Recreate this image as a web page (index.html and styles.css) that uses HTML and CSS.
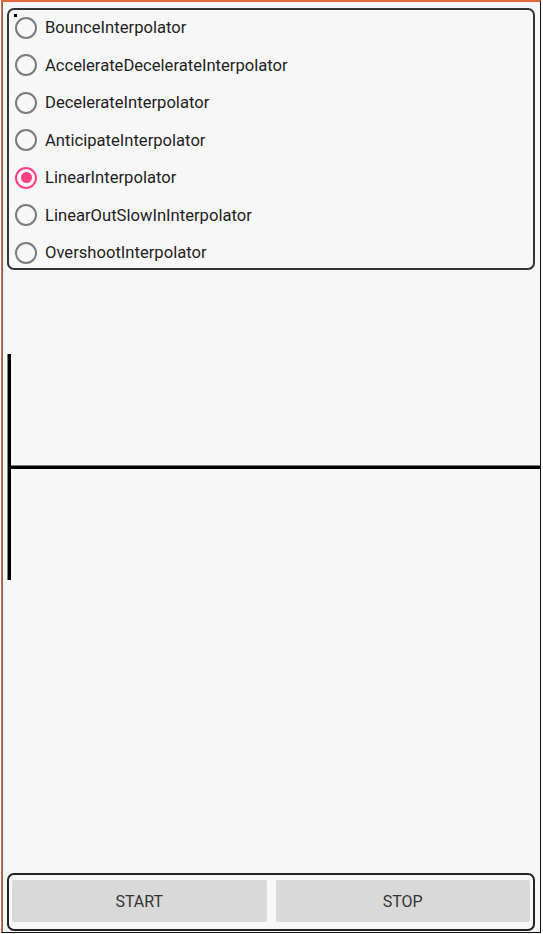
FILE: index.html
```html
<!DOCTYPE html>
<html>
<head>
<meta charset="utf-8">
<link rel="stylesheet" href="styles.css">
</head>
<body>
<div class="screen">
  <div class="group">
    <span class="dot-marker"></span>
    <div class="list">
      <label class="row"><span class="radio"></span><span class="label">BounceInterpolator</span></label>
      <label class="row"><span class="radio"></span><span class="label">AccelerateDecelerateInterpolator</span></label>
      <label class="row"><span class="radio"></span><span class="label">DecelerateInterpolator</span></label>
      <label class="row"><span class="radio"></span><span class="label">AnticipateInterpolator</span></label>
      <label class="row"><span class="radio checked"></span><span class="label">LinearInterpolator</span></label>
      <label class="row"><span class="radio"></span><span class="label">LinearOutSlowInInterpolator</span></label>
      <label class="row"><span class="radio"></span><span class="label">OvershootInterpolator</span></label>
    </div>
  </div>
  <div class="canvas">
    <svg class="drawing" width="540" height="602" viewBox="0 0 540 602">
      <rect x="6.5" y="84" width="3.5" height="226" fill="#000"/>
      <rect x="10" y="195.5" width="532" height="3.5" fill="#000"/>
    </svg>
  </div>
  <div class="buttons">
    <button class="btn">START</button>
    <button class="btn">STOP</button>
  </div>
</div>
</body>
</html>
```

FILE: styles.css
```css
html, body {
  margin: 0;
  padding: 0;
  background: #ffffff;
}

.screen {
  position: relative;
  margin-left: 1px;
  width: 540px;
  height: 933px;
  box-sizing: border-box;
  border-top: 2px solid #e0663d;
  border-left: 1px solid #e0663d;
  border-right: 1px solid #111;
  border-bottom: 1px solid #111;
  box-shadow: inset 1px 0 0 #6a6a6a;
  background: #f7f7f7;
  display: flex;
  flex-direction: column;
  font-family: Roboto, "Noto Sans", sans-serif;
  overflow: hidden;
}

.group {
  position: relative;
  margin: 6px 5px 0 5px;
  height: 262px;
  box-sizing: border-box;
  border: 2px solid #333;
  border-radius: 7px;
}

.dot-marker {
  position: absolute;
  left: 5px;
  top: 4px;
  width: 3px;
  height: 3px;
  background: #000;
}

.list {
  margin-top: -1px;
  display: flex;
  flex-direction: column;
}

.row {
  height: 37.5px;
  display: flex;
  align-items: center;
}

.radio {
  margin-left: 6px;
  width: 18px;
  height: 18px;
  border: 2px solid #7b7b7b;
  border-radius: 50%;
  flex: none;
  position: relative;
}

.radio.checked {
  border-color: #ff4081;
}

.radio.checked::after {
  content: "";
  position: absolute;
  left: 3.5px;
  top: 3.5px;
  width: 11px;
  height: 11px;
  border-radius: 50%;
  background: #ff4081;
}

.label {
  margin-left: 8px;
  font-size: 16.6px;
  color: #1e1e1e;
}

.canvas {
  flex: 1;
  position: relative;
}

.drawing {
  display: block;
  margin-left: -1px;
}

.buttons {
  margin: 0 5px 1px 5px;
  height: 58px;
  box-sizing: border-box;
  border: 2px solid #222;
  border-radius: 7px;
  padding: 5px 3px 7px 3px;
  display: flex;
  gap: 9px;
}

.btn {
  flex: 1;
  border: none;
  border-radius: 2px;
  background: #d9d9d9;
  font-family: Roboto, "Noto Sans", sans-serif;
  font-size: 16px;
  color: #333;
  padding: 0;
}
```
